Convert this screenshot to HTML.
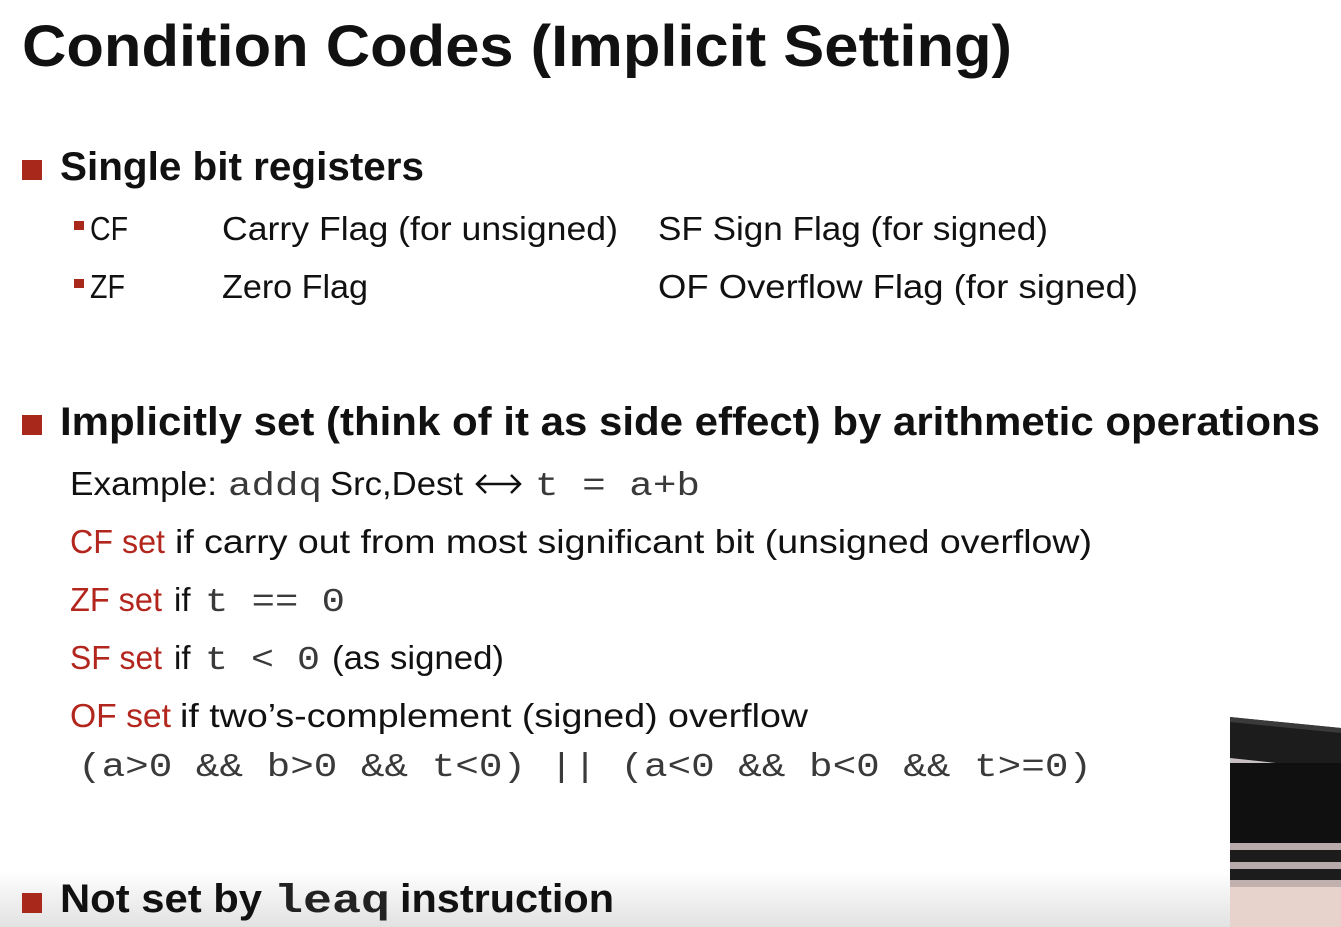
<!DOCTYPE html>
<html><head><meta charset="utf-8"><style>
html,body{margin:0;padding:0;background:#fff;width:1341px;height:927px;overflow:hidden}
svg{display:block}
text{font-family:"Liberation Sans",sans-serif;fill:#111}
.b{font-weight:bold}
.m{font-family:"Liberation Mono",monospace;fill:#3a3a3a}
.r{fill:#b3261e}
</style></head><body>
<svg width="1341" height="927" viewBox="0 0 1341 927" xmlns="http://www.w3.org/2000/svg">
<defs>
<linearGradient id="g" x1="0" y1="0" x2="0" y2="1"><stop offset="0" stop-color="#fff"/><stop offset="1" stop-color="#e2e2e2"/></linearGradient>
</defs>
<rect x="0" y="870" width="1341" height="57" fill="url(#g)"/>
<text class="b" x="22" y="66" font-size="58" textLength="990" lengthAdjust="spacingAndGlyphs">Condition Codes (Implicit Setting)</text>

<rect x="22" y="160" width="20" height="20" fill="#a8281c"/>
<text class="b" x="60" y="180" font-size="40" textLength="364" lengthAdjust="spacingAndGlyphs">Single bit registers</text>
<rect x="74" y="221" width="10" height="9" fill="#a8281c"/>
<text x="90" y="240" font-size="33" textLength="38" lengthAdjust="spacingAndGlyphs">CF</text>
<text x="222" y="240" font-size="33" textLength="396" lengthAdjust="spacingAndGlyphs">Carry Flag (for unsigned)</text>
<text x="658" y="240" font-size="33" textLength="390" lengthAdjust="spacingAndGlyphs">SF  Sign Flag (for signed)</text>
<rect x="74" y="279" width="10" height="9" fill="#a8281c"/>
<text x="90" y="298" font-size="33" textLength="35" lengthAdjust="spacingAndGlyphs">ZF</text>
<text x="222" y="298" font-size="33" textLength="146" lengthAdjust="spacingAndGlyphs">Zero Flag</text>
<text x="658" y="298" font-size="33" textLength="480" lengthAdjust="spacingAndGlyphs">OF  Overflow Flag (for signed)</text>

<rect x="22" y="415" width="20" height="20" fill="#a8281c"/>
<text class="b" x="60" y="435" font-size="40" textLength="1260" lengthAdjust="spacingAndGlyphs">Implicitly set (think of it as side effect) by arithmetic operations</text>

<text x="70" y="495" font-size="33" textLength="147" lengthAdjust="spacingAndGlyphs">Example:</text>
<text class="m" x="228" y="495" font-size="33" textLength="94" lengthAdjust="spacingAndGlyphs">addq</text>
<text x="330" y="495" font-size="33" textLength="133" lengthAdjust="spacingAndGlyphs">Src,Dest</text>
<path d="M478 484 H520 M486 475 L477 484 L486 493 M511 475 L520 484 L511 493" stroke="#111" stroke-width="2.5" fill="none"/>
<text class="m" x="535" y="495" font-size="33" textLength="165" lengthAdjust="spacingAndGlyphs">t = a+b</text>

<text class="r" x="70" y="553" font-size="33" textLength="95" lengthAdjust="spacingAndGlyphs">CF set</text>
<text x="175" y="553" font-size="33" textLength="917" lengthAdjust="spacingAndGlyphs">if carry out from most significant bit (unsigned overflow)</text>

<text class="r" x="70" y="611" font-size="33" textLength="92" lengthAdjust="spacingAndGlyphs">ZF set</text>
<text x="174" y="611" font-size="33">if</text>
<text class="m" x="205" y="611" font-size="33" textLength="140" lengthAdjust="spacingAndGlyphs">t == 0</text>

<text class="r" x="70" y="669" font-size="33" textLength="92" lengthAdjust="spacingAndGlyphs">SF set</text>
<text x="174" y="669" font-size="33">if</text>
<text class="m" x="205" y="669" font-size="33" textLength="115" lengthAdjust="spacingAndGlyphs">t &lt; 0</text>
<text x="332" y="669" font-size="33" textLength="172" lengthAdjust="spacingAndGlyphs">(as signed)</text>

<text class="r" x="70" y="727" font-size="33" textLength="101" lengthAdjust="spacingAndGlyphs">OF set</text>
<text x="180" y="727" font-size="33" textLength="628" lengthAdjust="spacingAndGlyphs">if two’s-complement (signed) overflow</text>
<text class="m" x="78" y="776" font-size="33" textLength="1014" lengthAdjust="spacingAndGlyphs">(a&gt;0 &amp;&amp; b&gt;0 &amp;&amp; t&lt;0) || (a&lt;0 &amp;&amp; b&lt;0 &amp;&amp; t&gt;=0)</text>

<rect x="22" y="893" width="20" height="20" fill="#a8281c"/>
<text class="b" x="60" y="912" font-size="40" textLength="202" lengthAdjust="spacingAndGlyphs">Not set by</text>
<text class="m b" x="274" y="912" font-size="40" textLength="116" lengthAdjust="spacingAndGlyphs" style="fill:#222">leaq</text>
<text class="b" x="400" y="912" font-size="40" textLength="214" lengthAdjust="spacingAndGlyphs">instruction</text>

<g>
<polygon points="1230,717 1341,728 1341,927 1230,927" fill="#1c1c1c"/>
<polygon points="1230,717 1341,728 1341,733 1230,722" fill="#3a3a3a"/>
<polygon points="1230,758 1341,770 1341,776 1230,763" fill="#c8c0c0"/>
<rect x="1230" y="763" width="111" height="80" fill="#101010"/>
<rect x="1230" y="843" width="111" height="7" fill="#b8aaaa"/>
<rect x="1230" y="862" width="111" height="7" fill="#b8aaaa"/>
<rect x="1230" y="880" width="111" height="7" fill="#c0b0ae"/>
<rect x="1230" y="887" width="111" height="40" fill="#e8d2cc"/>
</g>
</svg>
</body></html>
